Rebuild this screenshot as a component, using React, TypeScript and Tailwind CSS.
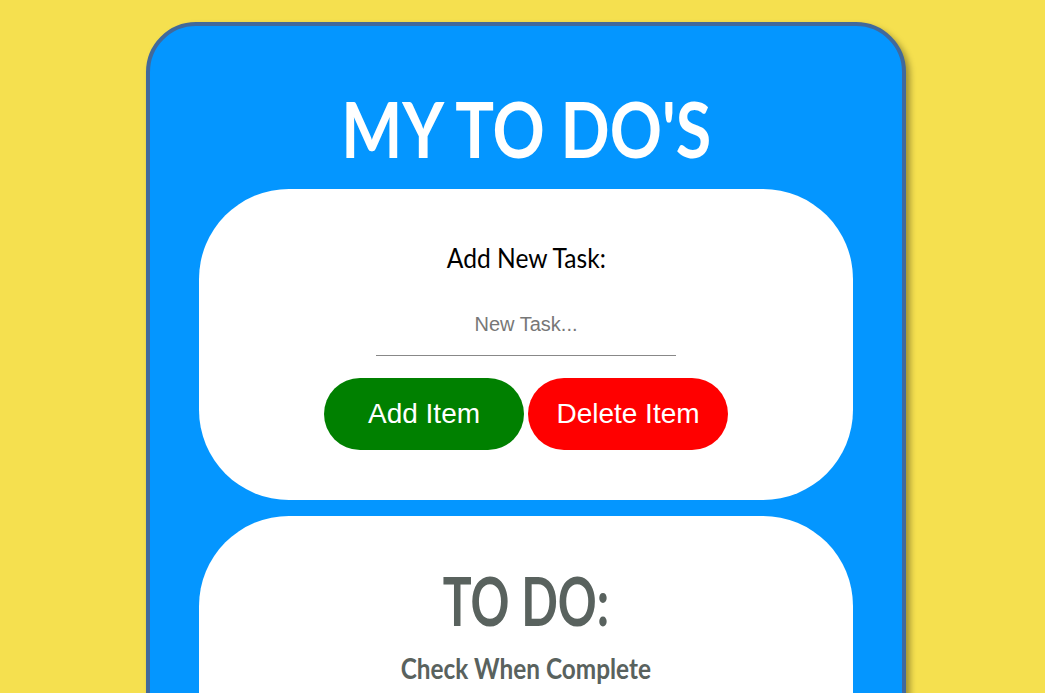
import React from "react";

export default function App() {
  return (
    <div className="h-[693px] overflow-hidden bg-[#f5e04f] pt-[22px]">
      <div className="ml-[146px] w-[760px] rounded-[50px] border-4 border-[#41699b] bg-[#0496ff] px-[49px] pb-[40px] shadow-[4px_4px_6px_rgba(0,0,0,0.35)]">
        <div className="flex justify-center pt-[64px] pb-[22px]">
          <h1 className="inline-block scale-x-[0.84] font-['Lato',sans-serif] text-[77px] leading-none font-bold whitespace-nowrap text-white">MY TO DO'S</h1>
        </div>
        <div className="flex h-[311px] flex-col items-center rounded-[90px] bg-white pt-[55px]">
          <div className="inline-block scale-x-[0.91] font-['Lato',sans-serif] text-[27px] leading-none whitespace-nowrap text-black">Add New Task:</div>
          <input
            placeholder="New Task..."
            className="mt-[23px] h-[62px] w-[300px] border-b border-[#888] text-center font-['Liberation_Sans',Arial,sans-serif] text-[20px] outline-none placeholder:text-[#777]"
          />
          <div className="mt-[22px] flex gap-[4px]">
            <button className="h-[72px] w-[200px] rounded-full bg-[#008000] font-['Liberation_Sans',Arial,sans-serif] text-[28px] text-white">Add Item</button>
            <button className="h-[72px] w-[200px] rounded-full bg-[#ff0000] font-['Liberation_Sans',Arial,sans-serif] text-[28px] text-white">Delete Item</button>
          </div>
        </div>
        <div className="mt-[16px] flex h-[300px] flex-col items-center rounded-[90px] bg-white pt-[52px]">
          <div className="inline-block scale-x-[0.73] font-['Lato',sans-serif] text-[66px] leading-none font-bold whitespace-nowrap text-[#59625e]">TO DO:</div>
          <div className="mt-[20px] inline-block scale-x-[0.87] font-['Lato',sans-serif] text-[28px] leading-none font-bold whitespace-nowrap text-[#59625e]">Check When Complete</div>
        </div>
      </div>
    </div>
  );
}
